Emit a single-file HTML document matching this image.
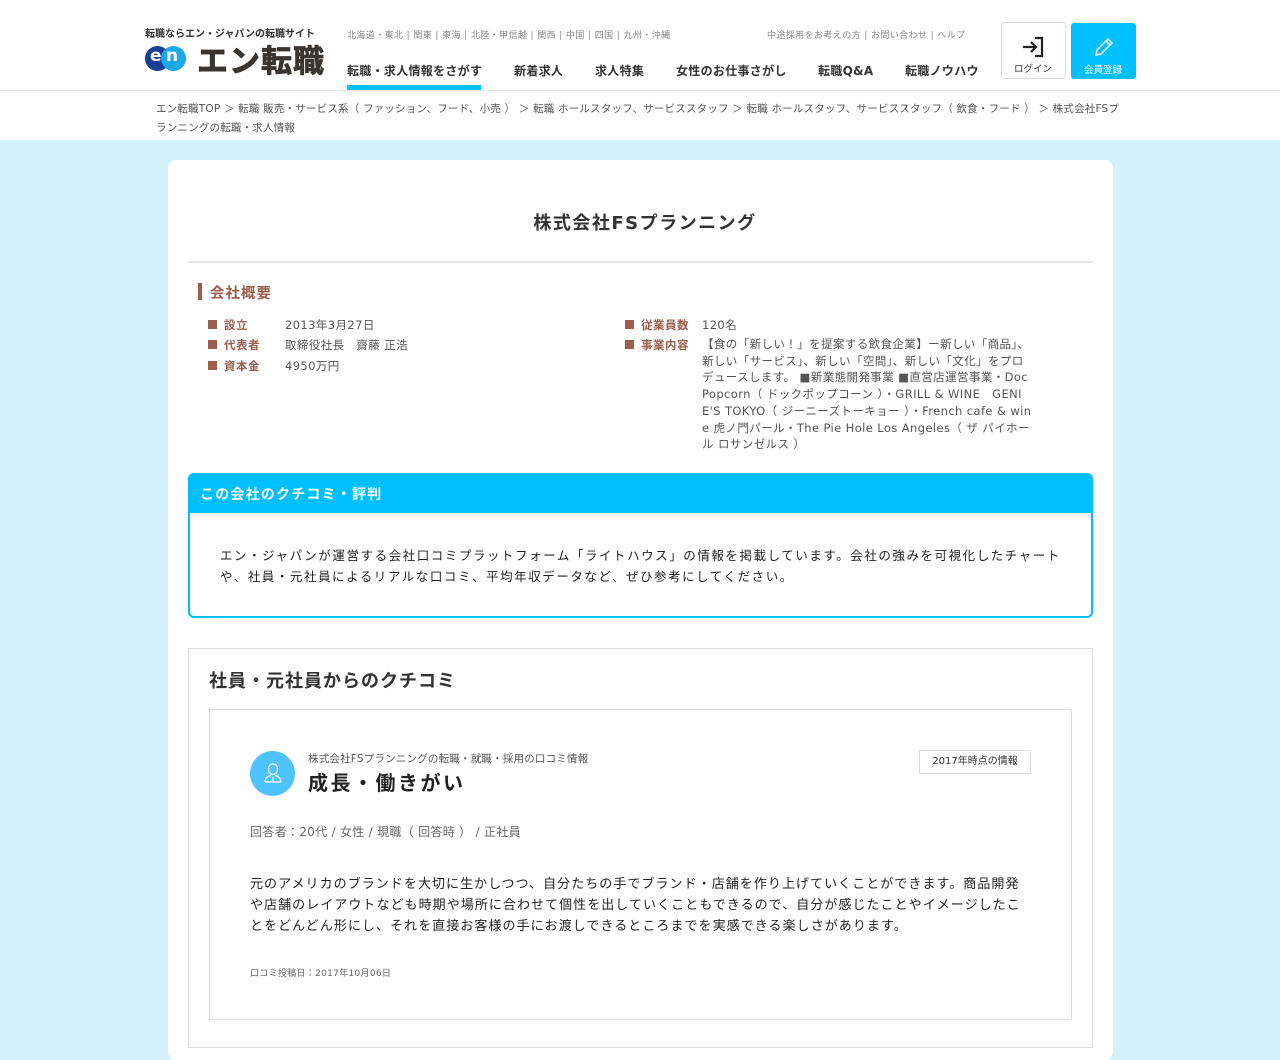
<!DOCTYPE html>
<html><head><meta charset="utf-8"><style>
*{margin:0;padding:0;box-sizing:border-box}
body{width:1280px;height:1024px;overflow:hidden;background:#d4f0fa;font-family:"DejaVu Sans","Noto Sans CJK JP",sans-serif;color:#333}
.hd{position:absolute;left:0;top:0;width:1280px;height:140px;background:#fff}
.hl{position:absolute;left:0;top:90px;width:1280px;height:1px;background:#e5e5e5}
.abs{position:absolute;white-space:nowrap}
.reg{font-size:9px;color:#888;letter-spacing:.4px}
.nav{font-size:12px;font-weight:bold;color:#333;top:62px;letter-spacing:.3px}
.card{position:absolute;left:168px;top:160px;width:945px;height:900px;background:#fff;border-radius:8px}
.lab{font-size:11.5px;color:#9b5f4f;font-weight:bold;letter-spacing:.5px}
.val{font-size:11.5px;color:#555;letter-spacing:.4px}
.sq{display:inline-block;width:9px;height:9px;background:#9b5f4f;margin-right:7px}
</style></head><body>
<div class="hd"></div><div class="hl"></div>
<div class="abs" style="left:145px;top:25px;font-size:10px;font-weight:bold;color:#333">転職ならエン・ジャパンの転職サイト</div>
<div class="abs" style="left:145px;top:46px;width:25px;height:25px;border-radius:13px;background:#1c3f94"></div>
<div class="abs" style="left:161px;top:46px;width:25px;height:25px;border-radius:13px;background:#1aa8e8"></div>
<div class="abs" style="left:150px;top:46px;font-size:17px;font-weight:bold;color:#fff">e</div>
<div class="abs" style="left:166px;top:46px;font-size:17px;font-weight:bold;color:#fff">n</div>
<div class="abs" style="left:197px;top:36px;font-size:31px;font-weight:bold;color:#3a3530;letter-spacing:1px;-webkit-text-stroke:.8px #3a3530">エン転職</div>
<div class="abs reg" style="left:347px;top:28px">北海道・東北 | 関東 | 東海 | 北陸・甲信越 | 関西 | 中国 | 四国 | 九州・沖縄</div>
<div class="abs reg" style="left:767px;top:28px">中途採用をお考えの方 | お問い合わせ | ヘルプ</div>
<div class="abs nav" style="left:347px">転職・求人情報をさがす</div>
<div class="abs" style="left:347px;top:85px;width:134px;height:5px;background:#00bfff"></div>
<div class="abs nav" style="left:514px">新着求人</div>
<div class="abs nav" style="left:595px">求人特集</div>
<div class="abs nav" style="left:676px">女性のお仕事さがし</div>
<div class="abs nav" style="left:818px">転職Q&amp;A</div>
<div class="abs nav" style="left:905px">転職ノウハウ</div>
<div class="abs" style="left:1001px;top:22px;width:65px;height:57px;border:1px solid #ddd;border-radius:3px;background:#fff"></div>
<svg class="abs" style="left:1021px;top:36px" width="24" height="22" viewBox="0 0 24 22"><path d="M2 11h12M10 6l5 5-5 5M14 2h7v18h-7" fill="none" stroke="#222" stroke-width="2.2"/></svg>
<div class="abs" style="left:1014px;top:61px;font-size:9.5px;color:#333">ログイン</div>
<div class="abs" style="left:1071px;top:23px;width:65px;height:56px;background:#00bfff;border-radius:3px"></div>
<svg class="abs" style="left:1093px;top:36px" width="22" height="22" viewBox="0 0 22 22"><path d="M3 19l1-5L15 3l4 4L8 18z M13 5l4 4" fill="none" stroke="#fff" stroke-width="1.5"/></svg>
<div class="abs" style="left:1084px;top:62px;font-size:9.5px;color:#fff">会員登録</div>
<div class="abs" style="left:156px;top:100px;font-size:10.5px;color:#555;line-height:19px;white-space:normal;width:968px;letter-spacing:.2px">エン転職TOP ＞ 転職 販売・サービス系（ ファッション、フード、小売 ） ＞ 転職 ホールスタッフ、サービススタッフ ＞ 転職 ホールスタッフ、サービススタッフ（ 飲食・フード ） ＞ 株式会社FSプランニングの転職・求人情報</div>

<div class="card"></div>
<div class="abs" style="left:0;width:1290px;text-align:center;top:209px;font-size:18px;font-weight:bold;color:#333;letter-spacing:1.5px">株式会社FSプランニング</div>
<div class="abs" style="left:188px;top:261px;width:905px;height:2px;background:#e5e5e5"></div>
<div class="abs" style="left:198px;top:283px;width:4px;height:17px;background:#9b5f4f"></div>
<div class="abs" style="left:210px;top:282px;font-size:14.5px;font-weight:bold;color:#9b5f4f;letter-spacing:1px">会社概要</div>
<div class="abs lab" style="left:208px;top:317px"><span class="sq"></span>設立</div><div class="abs val" style="left:285px;top:317px">2013年3月27日</div>
<div class="abs lab" style="left:208px;top:337px"><span class="sq"></span>代表者</div><div class="abs val" style="left:285px;top:337px">取締役社長　齋藤 正浩</div>
<div class="abs lab" style="left:208px;top:358px"><span class="sq"></span>資本金</div><div class="abs val" style="left:285px;top:358px">4950万円</div>
<div class="abs lab" style="left:625px;top:317px"><span class="sq"></span>従業員数</div><div class="abs val" style="left:702px;top:317px">120名</div>
<div class="abs lab" style="left:625px;top:337px"><span class="sq"></span>事業内容</div>
<div class="abs val" style="left:702px;top:336px;width:332px;white-space:normal;word-break:break-all;line-height:16.7px">【食の「新しい！」を提案する飲食企業】ー新しい「商品」、新しい「サービス」、新しい「空間」、新しい「文化」をプロデュースします。 ■新業態開発事業 ■直営店運営事業・Doc Popcorn（ ドックポップコーン ）・GRILL &amp; WINE　GENIE'S TOKYO（ ジーニーズトーキョー ）・French cafe &amp; wine 虎ノ門パール・The Pie Hole Los Angeles（ ザ パイホール ロサンゼルス ）</div>

<div class="abs" style="left:188px;top:473px;width:905px;height:145px;border:2px solid #00bfff;border-radius:6px"></div>
<div class="abs" style="left:188px;top:473px;width:905px;height:40px;background:#00bfff;border-radius:6px 6px 0 0"></div>
<div class="abs" style="left:200px;top:484px;font-size:14px;font-weight:bold;color:#fff;letter-spacing:1.2px">この会社のクチコミ・評判</div>
<div class="abs" style="left:220px;top:545px;width:860px;white-space:normal;font-size:12.5px;line-height:21px;color:#222;letter-spacing:1.55px">エン・ジャパンが運営する会社口コミプラットフォーム「ライトハウス」の情報を掲載しています。会社の強みを可視化したチャート<br>や、社員・元社員によるリアルな口コミ、平均年収データなど、ぜひ参考にしてください。</div>

<div class="abs" style="left:188px;top:648px;width:905px;height:400px;border:1px solid #ddd"></div>
<div class="abs" style="left:209px;top:667px;font-size:18px;font-weight:bold;color:#333;letter-spacing:1px">社員・元社員からのクチコミ</div>
<div class="abs" style="left:209px;top:709px;width:863px;height:311px;border:1px solid #ddd"></div>
<div class="abs" style="left:250px;top:751px;width:45px;height:45px;border-radius:50%;background:#4dc3ff"></div>
<svg class="abs" style="left:261px;top:761px" width="24" height="24" viewBox="0 0 24 24"><path d="M12 3c-3 0-4.5 2-4.5 5s1.5 5.5 4.5 5.5 4.5-2.5 4.5-5.5S15 3 12 3z M4 21c0-4 3-6 6-6.5M20 21c0-4-3-6-6-6.5M4 21h16M12 16v4" fill="none" stroke="#fff" stroke-width="1.2"/></svg>
<div class="abs" style="left:308px;top:751px;font-size:10.5px;color:#555;letter-spacing:.2px">株式会社FSプランニングの転職・就職・採用の口コミ情報</div>
<div class="abs" style="left:308px;top:767px;font-size:20px;font-weight:bold;color:#222;letter-spacing:2.5px">成長・働きがい</div>
<div class="abs" style="left:919px;top:750px;width:112px;height:24px;border:1px solid #ddd;font-size:10px;color:#333;text-align:center;line-height:22px">2017年時点の情報</div>
<div class="abs" style="left:250px;top:823px;font-size:12px;color:#666;letter-spacing:.3px">回答者：20代 / 女性 / 現職（ 回答時 ） / 正社員</div>
<div class="abs" style="left:250px;top:874px;width:800px;white-space:normal;font-size:13px;line-height:21px;color:#222;letter-spacing:1.05px">元のアメリカのブランドを大切に生かしつつ、自分たちの手でブランド・店舗を作り上げていくことができます。商品開発<br>や店舗のレイアウトなども時期や場所に合わせて個性を出していくこともできるので、自分が感じたことやイメージしたこ<br>とをどんどん形にし、それを直接お客様の手にお渡しできるところまでを実感できる楽しさがあります。</div>
<div class="abs" style="left:250px;top:966px;font-size:9px;color:#666;letter-spacing:.3px">口コミ投稿日：2017年10月06日</div>
</body></html>
